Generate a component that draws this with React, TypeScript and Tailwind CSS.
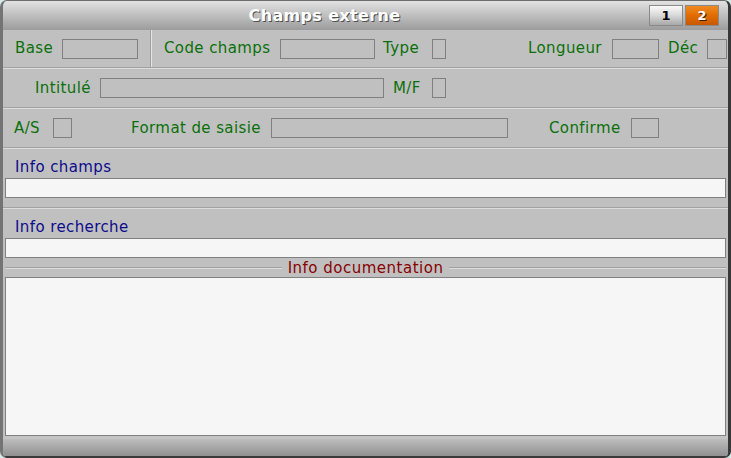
import React from "react";

const font = { fontFamily: '"DejaVu Sans", Verdana, sans-serif' };

function Field({ w }: { w: string }) {
  return <div className={`h-[20px] ${w} border border-[#808080] shrink-0`} />;
}

function Sep() {
  return (
    <div className="shrink-0 flex flex-col">
      <div className="h-[1px] bg-[#a2a2a2]" />
      <div className="h-[1px] bg-[#dcdcdc]" />
    </div>
  );
}

function Line() {
  return (
    <div className="flex-1 flex flex-col">
      <div className="h-[1px] bg-[#a0a0a0]" />
      <div className="h-[1px] bg-[#dcdcdc]" />
    </div>
  );
}

export default function App() {
  return (
    <div className="w-[731px] h-[458px] bg-[#d3ebe6]" style={font}>
      <div className="w-full h-full flex flex-col rounded-[7px] overflow-hidden border-l-[3px] border-l-[#747474] border-r-[3px] border-r-[#383838] border-t border-t-[#6c6c6c] bg-[#c0c0c0]">
        {/* title */}
        <div className="h-[29px] shrink-0 flex items-center bg-gradient-to-b from-[#e2e2e2] to-[#9c9c9c] pr-[9px]">
          <div
            className="flex-1 text-center text-white font-bold text-[16px] tracking-[0.35px] leading-[20px] pt-[1px]"
            style={{ textShadow: "1px 1px 0 #505050" }}
          >
            Champs externe
          </div>
          <div className="flex gap-[2px] pl-[3px]">
            <div className="w-[34px] h-[21px] border border-[#8a8a8a] bg-gradient-to-b from-[#fafafa] via-[#d8d8d8] to-[#a8a8a8] flex items-center justify-center text-[13px] font-bold text-black">
              1
            </div>
            <div
              className="w-[34px] h-[21px] border border-[#8a8a8a] bg-gradient-to-b from-[#f08a20] via-[#e06c00] to-[#c85800] flex items-center justify-center text-[13px] font-bold text-white"
              style={{ textShadow: "1px 1px 0 #402000" }}
            >
              2
            </div>
          </div>
        </div>

        {/* row 1 */}
        <div className="h-[37px] shrink-0 flex items-stretch text-[15px] tracking-[0.4px] text-[#0a700a]">
          <div className="flex items-center pl-[12px]">
            <div className="w-[47px]">Base</div>
            <Field w="w-[76px]" />
          </div>
          <div className="ml-[12px] w-[2px] border-l border-l-[#a0a0a0] border-r border-r-[#e4e4e4]" />
          <div className="flex items-center ml-[12px]">
            <div className="w-[116px]">Code champs</div>
            <Field w="w-[95px]" />
            <div className="ml-[8px] w-[49px]">Type</div>
            <Field w="w-[14px]" />
            <div className="ml-[82px] w-[84px]">Longueur</div>
            <Field w="w-[47px]" />
            <div className="ml-[9px] w-[39px]">Déc</div>
            <Field w="w-[20px]" />
          </div>
        </div>
        <Sep />

        {/* row 2 */}
        <div className="h-[38px] shrink-0 flex items-center text-[15px] tracking-[0.4px] text-[#0a700a] pl-[32px]">
          <div className="w-[65px]">Intitulé</div>
          <Field w="w-[284px]" />
          <div className="ml-[9px] w-[39px]">M/F</div>
          <Field w="w-[14px]" />
        </div>
        <Sep />

        {/* row 3 */}
        <div className="h-[38px] shrink-0 flex items-center text-[15px] tracking-[0.4px] text-[#0a700a] pl-[11px]">
          <div className="w-[39px]">A/S</div>
          <Field w="w-[19px]" />
          <div className="ml-[59px] w-[140px]">Format de saisie</div>
          <Field w="w-[237px]" />
          <div className="ml-[41px] w-[82px]">Confirme</div>
          <Field w="w-[28px]" />
        </div>
        <Sep />

        {/* Info champs */}
        <div className="h-[58px] shrink-0 flex flex-col px-[2px] pt-[9px]">
          <div className="h-[18px] leading-[18px] text-[15px] tracking-[0.4px] text-[#0c0c8c] pl-[10px]">Info champs</div>
          <div className="mt-[2px] h-[20px] border border-[#808080] bg-[#f6f6f6]" />
        </div>
        <Sep />

        {/* Info recherche */}
        <div className="shrink-0 flex flex-col px-[2px] pt-[9px]">
          <div className="h-[18px] leading-[18px] text-[15px] tracking-[0.4px] text-[#0c0c8c] pl-[10px]">Info recherche</div>
          <div className="mt-[2px] h-[20px] border border-[#808080] bg-[#f6f6f6]" />
        </div>

        {/* Info documentation */}
        <div className="h-[19px] shrink-0 flex items-center px-[2px]">
          <Line />
          <div className="px-[6px] text-[15px] tracking-[0.5px] text-[#880000] leading-[18px]">Info documentation</div>
          <Line />
        </div>
        <div className="px-[2px] shrink-0">
          <div className="h-[159px] border border-[#808080] bg-[#f6f6f6]" />
        </div>

        {/* bottom bar */}
        <div className="flex-1 border-t-[3px] border-t-[#c4c4c4] border-b-2 border-b-[#3a3a3a] bg-gradient-to-b from-[#bdbdbd] to-[#919191]" />
      </div>
    </div>
  );
}
